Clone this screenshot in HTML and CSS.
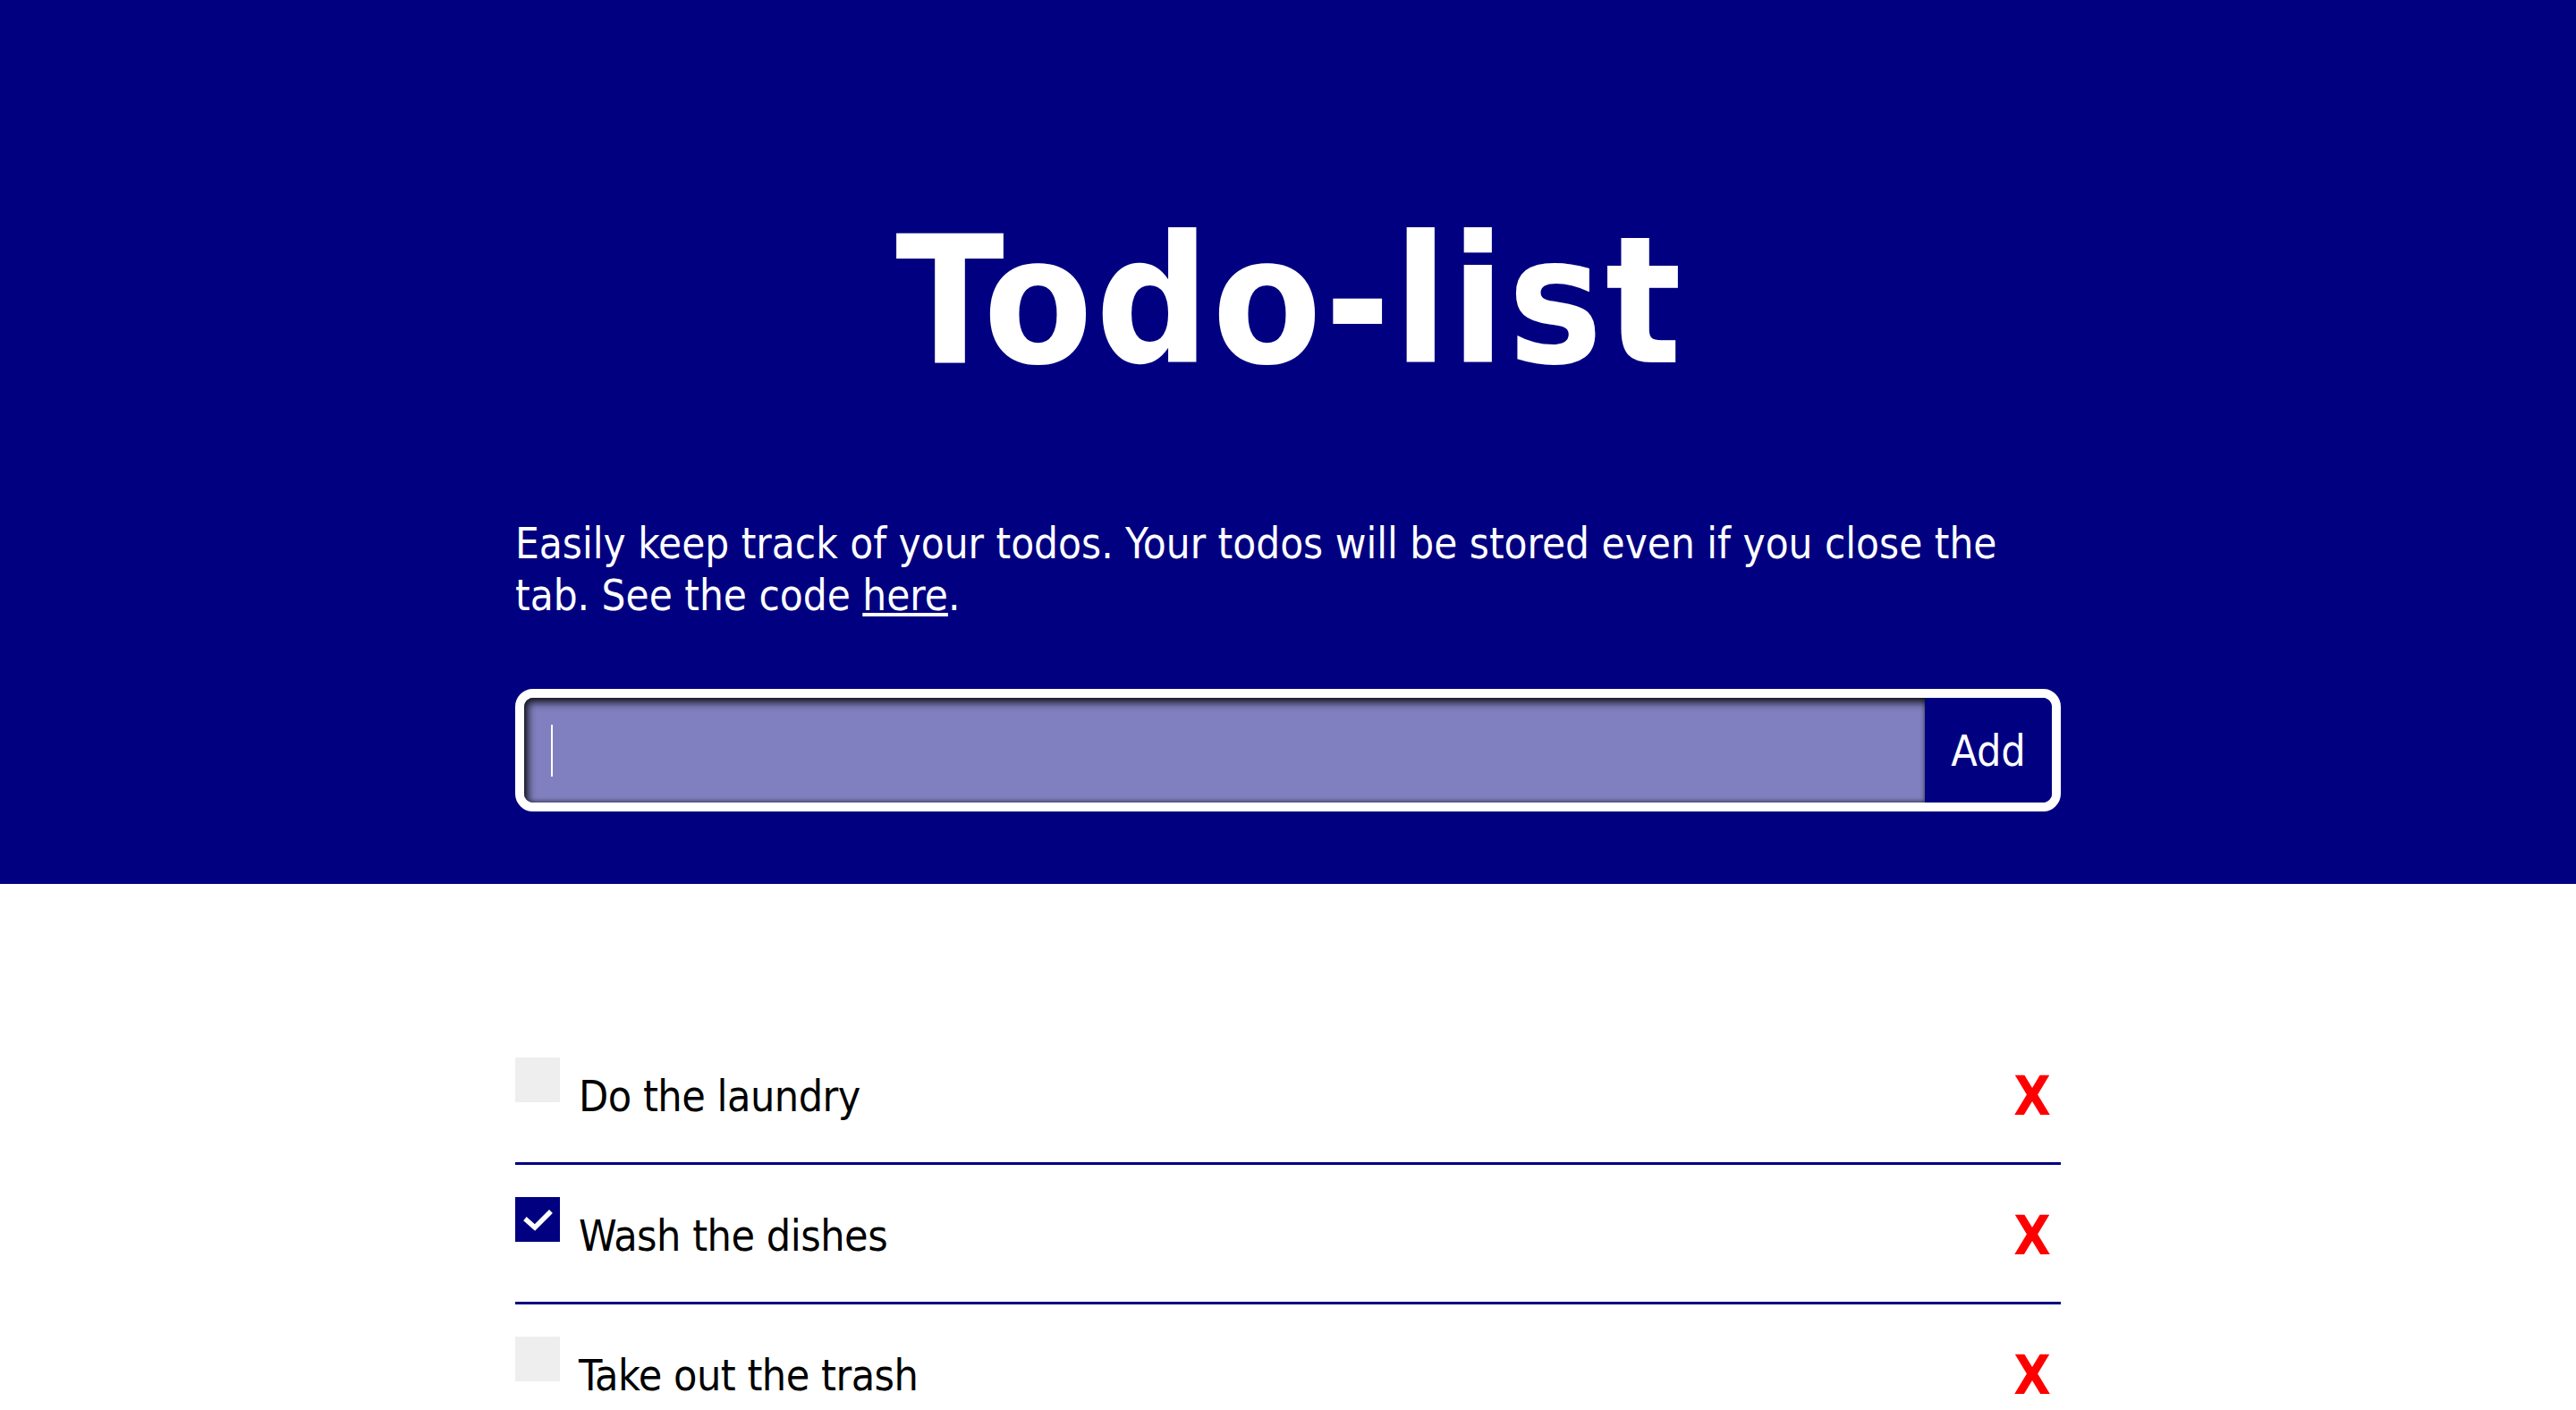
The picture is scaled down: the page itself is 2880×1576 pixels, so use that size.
FILE: index.html
```html
<!DOCTYPE html>
<html lang="en">
<head>
<meta charset="utf-8">
<title>Todo-list</title>
<link rel="stylesheet" href="styles.css">
</head>
<body>
<header class="hero">
  <h1 class="title">Todo-list</h1>
  <div class="container">
    <p class="intro">Easily keep track of your todos. Your todos will be stored even if you close the tab. See the code <a class="link" href="#">here</a>.</p>
    <form class="add-form">
      <input class="add-input" type="text" aria-label="New todo">
      <span class="caret"></span>
      <button class="add-button" type="button">Add</button>
    </form>
  </div>
</header>
<main>
  <ul class="todo-list container">
    <li class="todo">
      <span class="check"></span>
      <span class="todo-text">Do the laundry</span>
      <button class="remove" type="button">X</button>
    </li>
    <li class="todo">
      <span class="check checked"><svg viewBox="0 0 50 50" width="50" height="50"><polyline points="13,26 22,34 38,18" fill="none" stroke="#fff" stroke-width="5.5" stroke-linecap="square"/></svg></span>
      <span class="todo-text">Wash the dishes</span>
      <button class="remove" type="button">X</button>
    </li>
    <li class="todo">
      <span class="check"></span>
      <span class="todo-text">Take out the trash</span>
      <button class="remove" type="button">X</button>
    </li>
  </ul>
</main>
</body>
</html>
```
FILE: styles.css
```css
html, body {
  margin: 0;
  padding: 0;
  background: #fff;
  font-family: "DejaVu Sans Condensed", "DejaVu Sans", sans-serif;
}

.hero {
  background: #000080;
  color: #fff;
  padding: 219px 0 81px;
}

.title {
  margin: 0;
  padding-left: 4px;
  text-align: center;
  font-size: 198px;
  line-height: 235px;
  letter-spacing: 3px;
  font-weight: bold;
}

.container {
  width: 60%;
  margin: 0 auto;
}

.intro {
  margin: 125px 0 0;
  font-size: 47.2px;
  line-height: 58px;
}

.link {
  color: #fff;
}

.add-form {
  position: relative;
  display: flex;
  margin-top: 75px;
  border: 10px solid #fff;
  border-radius: 20px;
  overflow: hidden;
  height: 117px;
  box-sizing: content-box;
}

.add-input {
  flex: 1;
  min-width: 0;
  margin: 0;
  border: none;
  outline: none;
  padding: 0 30px;
  background: #8080c0;
  color: #fff;
  caret-color: #fff;
  font-family: inherit;
  font-size: 48px;
  box-shadow: inset 4px 5px 10px rgba(0, 0, 0, 0.9), inset 0 -2px 4px rgba(0, 0, 0, 0.35);
}

.caret {
  position: absolute;
  left: 30px;
  top: 30px;
  width: 2px;
  height: 58px;
  background: #fff;
}

.add-button {
  width: 142px;
  margin: 0;
  border: none;
  padding: 0;
  background: #000080;
  color: #fff;
  font-family: inherit;
  font-size: 48px;
}

.todo-list {
  list-style: none;
  padding: 0;
  margin-top: 158px;
  margin-bottom: 0;
}

.todo {
  display: flex;
  align-items: flex-start;
  padding: 36px 0 38px;
  border-bottom: 3px solid #000080;
}

.check {
  flex: none;
  width: 50px;
  height: 50px;
  background: #eeeeee;
}

.check.checked {
  background: #000080;
}

.check svg {
  display: block;
}

.todo-text {
  margin: 7px 0 0 21px;
  font-size: 48px;
  line-height: 72px;
  letter-spacing: -0.5px;
  color: #000;
}

.remove {
  margin: 7px 0 0 auto;
  padding: 0 11px;
  border: none;
  background: none;
  color: #ff0000;
  font-family: inherit;
  font-weight: bold;
  font-size: 60px;
  line-height: 72px;
}
```
